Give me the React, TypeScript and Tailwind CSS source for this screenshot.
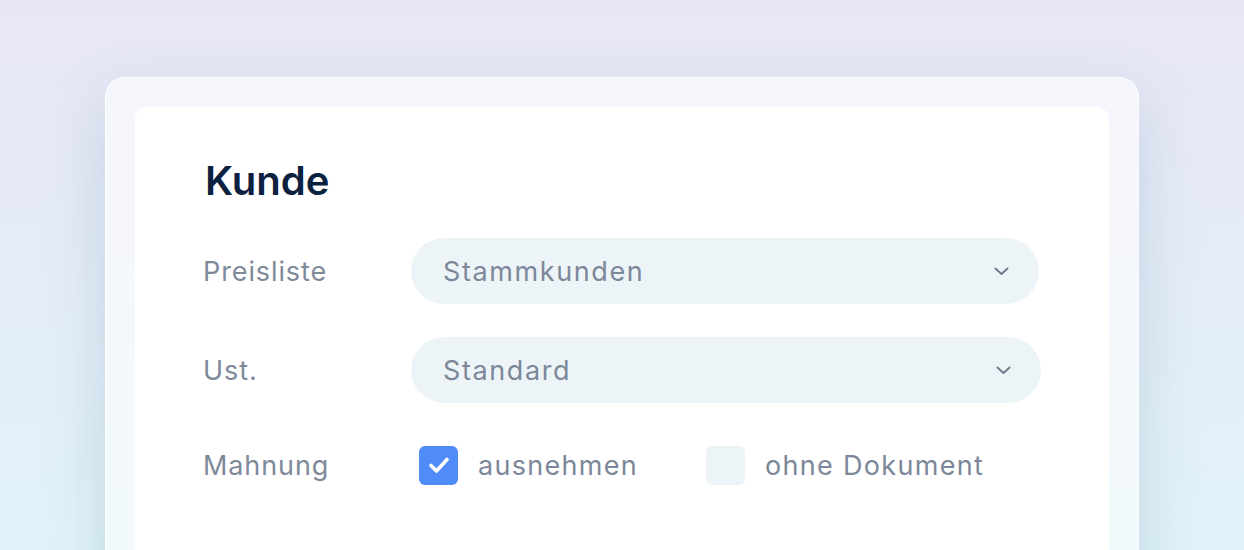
import React from "react";

function Chevron() {
  return (
    <svg width="15" height="9" viewBox="0 0 15 9" fill="none" className="shrink-0">
      <polyline
        points="1.5 1.5 7.5 7 13.5 1.5"
        stroke="#6f7a8c"
        strokeWidth="2"
        strokeLinecap="round"
        strokeLinejoin="round"
      />
    </svg>
  );
}

function Select({ value, wide }: { value: string; wide?: boolean }) {
  return (
    <div
      className={`flex h-[66px] flex-1 items-center justify-between rounded-full bg-[#edf4f8] pl-[32px] pr-[30px] ${
        wide ? "mr-[-2px]" : ""
      }`}
    >
      <span className="pt-[3px] text-[27px] tracking-[1.6px] text-[#7c8799]">{value}</span>
      <Chevron />
    </div>
  );
}

function Checkbox({ checked, label }: { checked?: boolean; label: string }) {
  return (
    <div className="flex items-center gap-[20px]">
      {checked ? (
        <div className="flex h-[39px] w-[39px] items-center justify-center rounded-[6px] bg-[#4f8bf9]">
          <svg width="22" height="18" viewBox="0 0 22 18" fill="none">
            <polyline
              points="3 9.5 8.5 15 19 3.5"
              stroke="white"
              strokeWidth="3.6"
              strokeLinecap="round"
              strokeLinejoin="round"
            />
          </svg>
        </div>
      ) : (
        <div className="h-[39px] w-[39px] rounded-[6px] bg-[#edf4f8]" />
      )}
      <span className="pt-[3px] text-[27px] tracking-[1.3px] text-[#7c8799]">{label}</span>
    </div>
  );
}

function Row({ label, children, className }: { label: string; children: React.ReactNode; className?: string }) {
  return (
    <div className={`flex h-[66px] items-center ${className ?? ""}`}>
      <div className="ml-[-2px] w-[208px] shrink-0 pt-[3px] text-[27px] tracking-[0.9px] text-[#7e899a]">{label}</div>
      {children}
    </div>
  );
}

export default function App() {
  return (
    <div
      className="h-[550px] w-full overflow-hidden bg-gradient-to-b from-[#e8e6f5] to-[#e1f3f9] px-[105px] pt-[77px]"
      style={{ fontFamily: "Inter, 'Noto Sans', sans-serif" }}
    >
      <div className="h-[560px] rounded-[20px] border border-white/80 bg-white/60 p-[29px] shadow-[0_24px_60px_rgba(120,160,185,0.32)]">
        <div className="h-full rounded-[12px] bg-white px-[70px] pt-[54px]">
          <h2 className="text-[40px] font-semibold leading-[40px] text-[#0c2140]">Kunde</h2>

          <Row label="Preisliste" className="mt-[37px]">
            <Select value="Stammkunden" />
          </Row>

          <Row label="Ust." className="mt-[33px]">
            <Select value="Standard" wide />
          </Row>

          <Row label="Mahnung" className="mt-[29px]">
            <div className="ml-[8px] flex items-center gap-[68px]">
              <Checkbox checked label="ausnehmen" />
              <Checkbox label="ohne Dokument" />
            </div>
          </Row>
        </div>
      </div>
    </div>
  );
}
